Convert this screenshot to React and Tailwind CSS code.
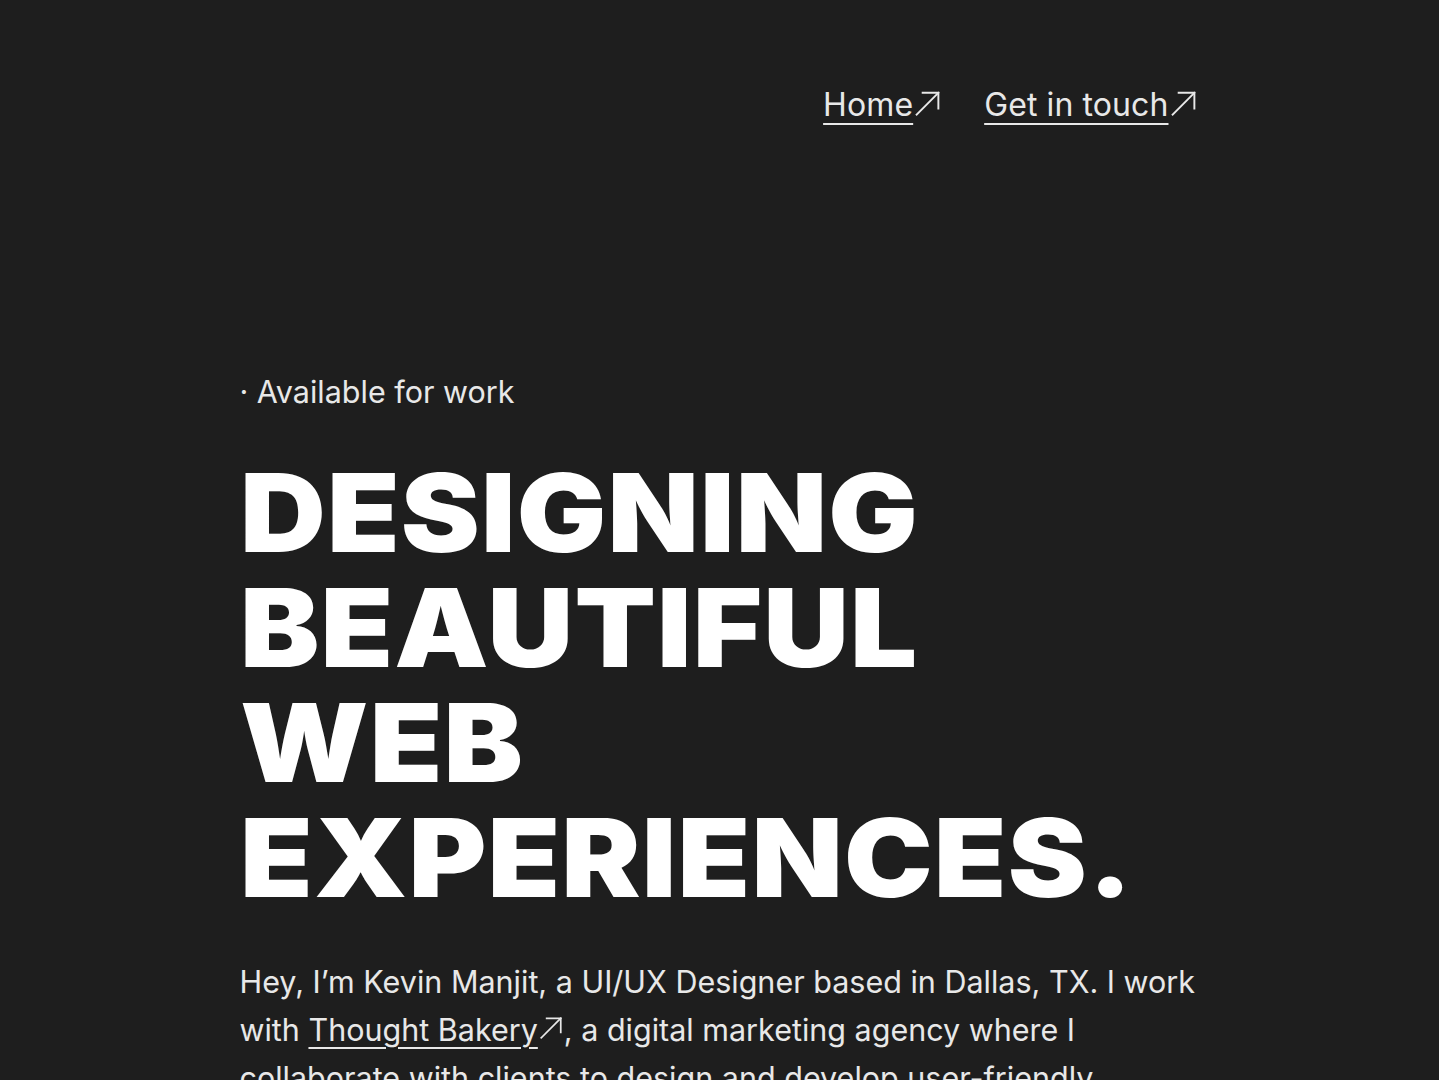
const Arrow = ({ className = "" }) => (
  <svg
    viewBox="0 0 24 24"
    fill="none"
    stroke="currentColor"
    strokeWidth="1.6"
    strokeLinecap="square"
    className={className}
  >
    <path d="M3 22 L21 4" />
    <path d="M8 4 H21 V17" />
  </svg>
);

const NavLink = ({ children }) => (
  <a href="#" className="flex items-start text-[32px] leading-none text-[#e8e8e8] tracking-[0.1px]">
    <span className="underline decoration-2 underline-offset-[7px]">{children}</span>
    <Arrow className="w-[29px] h-[29px] -mt-[1px]" />
  </a>
);

export default function App() {
  return (
    <div
      className="min-h-screen bg-[#1e1e1e] text-[#e8e8e8]"
      style={{ fontFamily: "Inter, 'Noto Sans', sans-serif" }}
    >
      <div className="mx-auto w-[960px] pt-[89px]">
        {/* nav */}
        <nav className="flex justify-end gap-[42px] pr-[2px]">
          <NavLink>Home</NavLink>
          <NavLink>Get in touch</NavLink>
        </nav>

        {/* hero */}
        <section className="pt-[256px]">
          <p className="text-[30.5px] leading-none">· Available for work</p>

          <h1 className="mt-[47px] origin-left scale-x-[1.1] text-[108px] leading-[115px] font-black uppercase text-white tracking-[1px]">
            Designing
            <br />
            Beautiful
            <br />
            Web
            <br />
            Experiences.
          </h1>

          <p className="mt-[43px] text-[30.5px] leading-[48px]">
            Hey, I’m Kevin Manjit, a UI/UX Designer based in Dallas, TX. I work with{" "}
            <a href="#" className="underline decoration-2 underline-offset-[6px]">
              Thought Bakery
            </a>
            <Arrow className="inline-block w-[26px] h-[26px] -mt-[10px]" />, a digital marketing
            agency where I collaborate with clients to design and develop user-friendly
            websites that help businesses grow.
          </p>
        </section>
      </div>
    </div>
  );
}
